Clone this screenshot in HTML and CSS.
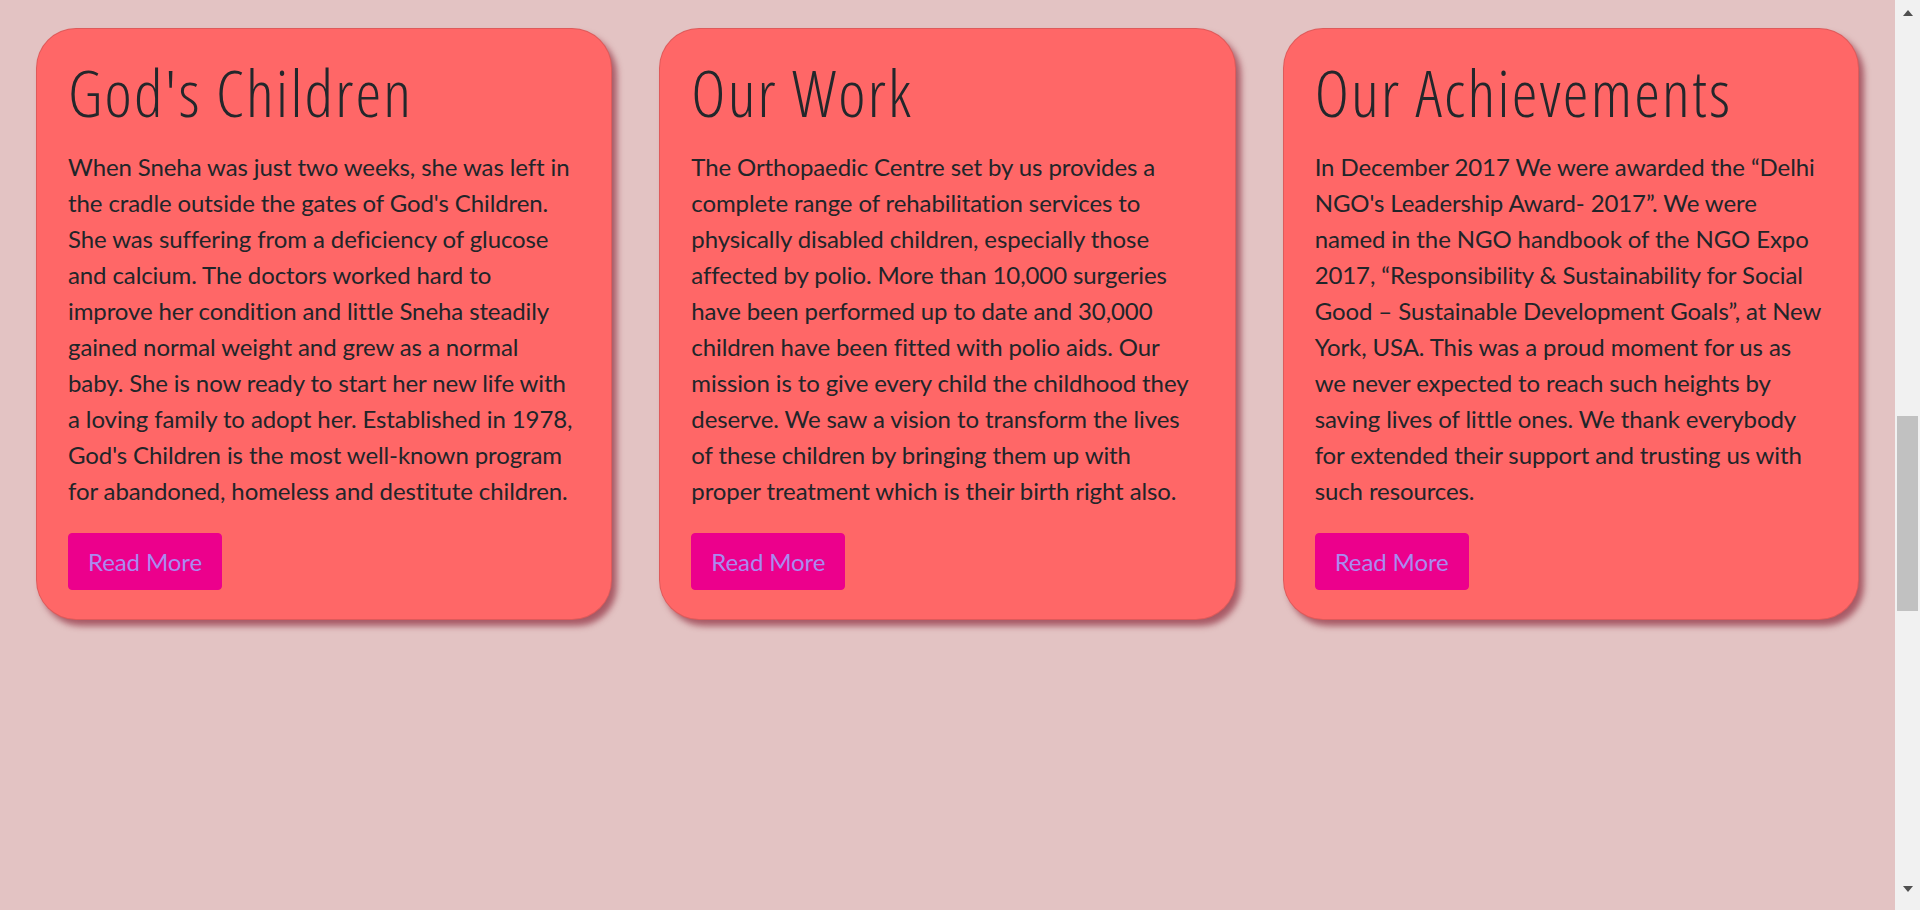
FILE: index.html
```html
<!DOCTYPE html>
<html lang="en">
<head>
<meta charset="utf-8">
<title>Our Work</title>
<link rel="stylesheet" href="styles.css">
</head>
<body>
<main class="page">
  <section class="cards">
    <article class="card">
      <h2 class="card-title">God's Children</h2>
      <p class="card-text">When Sneha was just two weeks, she was left in the cradle outside the gates of God's Children. She was suffering from a deficiency of glucose and calcium. The doctors worked hard to improve her condition and little Sneha steadily gained normal weight and grew as a normal baby. She is now ready to start her new life with a loving family to adopt her. Established in 1978, God's Children is the most well-known program for abandoned, homeless and destitute children.</p>
      <a class="btn" href="#">Read More</a>
    </article>
    <article class="card">
      <h2 class="card-title">Our Work</h2>
      <p class="card-text">The Orthopaedic Centre set by us provides a complete range of rehabilitation services to physically disabled children, especially those affected by polio. More than 10,000 surgeries have been performed up to date and 30,000 children have been fitted with polio aids. Our mission is to give every child the childhood they deserve. We saw a vision to transform the lives of these children by bringing them up with proper treatment which is their birth right also.</p>
      <a class="btn" href="#">Read More</a>
    </article>
    <article class="card">
      <h2 class="card-title">Our Achievements</h2>
      <p class="card-text">In December 2017 We were awarded the “Delhi NGO's Leadership Award- 2017”. We were named in the NGO handbook of the NGO Expo 2017, “Responsibility &amp; Sustainability for Social Good – Sustainable Development Goals”, at New York, USA. This was a proud moment for us as we never expected to reach such heights by saving lives of little ones. We thank everybody for extended their support and trusting us with such resources.</p>
      <a class="btn" href="#">Read More</a>
    </article>
  </section>
</main>
<aside class="scrollbar" aria-hidden="true">
  <div class="sb-arrow sb-up"></div>
  <div class="sb-track">
    <div class="sb-thumb"></div>
  </div>
  <div class="sb-arrow sb-down"></div>
</aside>
</body>
</html>
```
FILE: styles.css
```css
html, body {
  margin: 0;
  height: 100%;
}

body {
  display: flex;
  overflow: hidden;
  background: #e3c3c3;
  color: #212529;
  font-family: "Lato", "Liberation Sans", sans-serif;
}

.page {
  flex: 1;
  min-width: 0;
}

.cards {
  display: grid;
  grid-template-columns: repeat(3, 1fr);
  column-gap: 47px;
  padding: 28px 36px;
  align-items: stretch;
}

.card {
  display: flex;
  flex-direction: column;
  align-items: flex-start;
  background: #ff6767;
  border: 1px solid rgba(0, 0, 0, 0.125);
  border-radius: 40px;
  padding: 30px 34px 29px 31px;
  box-shadow: 5px 6px 6px rgba(130, 20, 40, 0.6);
}

.card-title {
  margin: 0 0 24px;
  font-family: "Open Sans", "Liberation Sans", sans-serif;
  font-weight: 300;
  font-stretch: 75%;
  font-size: 65px;
  line-height: 66px;
  letter-spacing: 2.2px;
  color: #23272b;
}

.card-text {
  margin: 0 0 24px;
  font-size: 24px;
  line-height: 36px;
  letter-spacing: -0.1px;
}

.btn {
  display: inline-block;
  background: #ec008c;
  color: #a98af0;
  border: 1px solid #ec008c;
  border-radius: 4px;
  padding: 10px 19px;
  font-size: 24px;
  line-height: 35px;
  letter-spacing: -0.1px;
  text-decoration: none;
}

.scrollbar {
  width: 25px;
  flex: none;
  display: flex;
  flex-direction: column;
  background: #f1f1f1;
}

.sb-arrow {
  height: 17px;
  display: flex;
  justify-content: center;
  align-items: center;
}

.sb-up::before,
.sb-down::before {
  content: "";
  width: 0;
  height: 0;
  border-left: 5.5px solid transparent;
  border-right: 5.5px solid transparent;
}

.sb-up {
  align-items: flex-end;
}

.sb-up::before {
  border-bottom: 6px solid #505050;
  margin-bottom: 1px;
}

.sb-down {
  align-items: flex-start;
  height: 22px;
}

.sb-down::before {
  border-top: 6px solid #505050;
  margin-top: -2px;
}

.sb-track {
  flex: 1;
  padding-top: 399px;
}

.sb-thumb {
  height: 195px;
  margin: 0 2px;
  background: #c1c1c1;
}
```
